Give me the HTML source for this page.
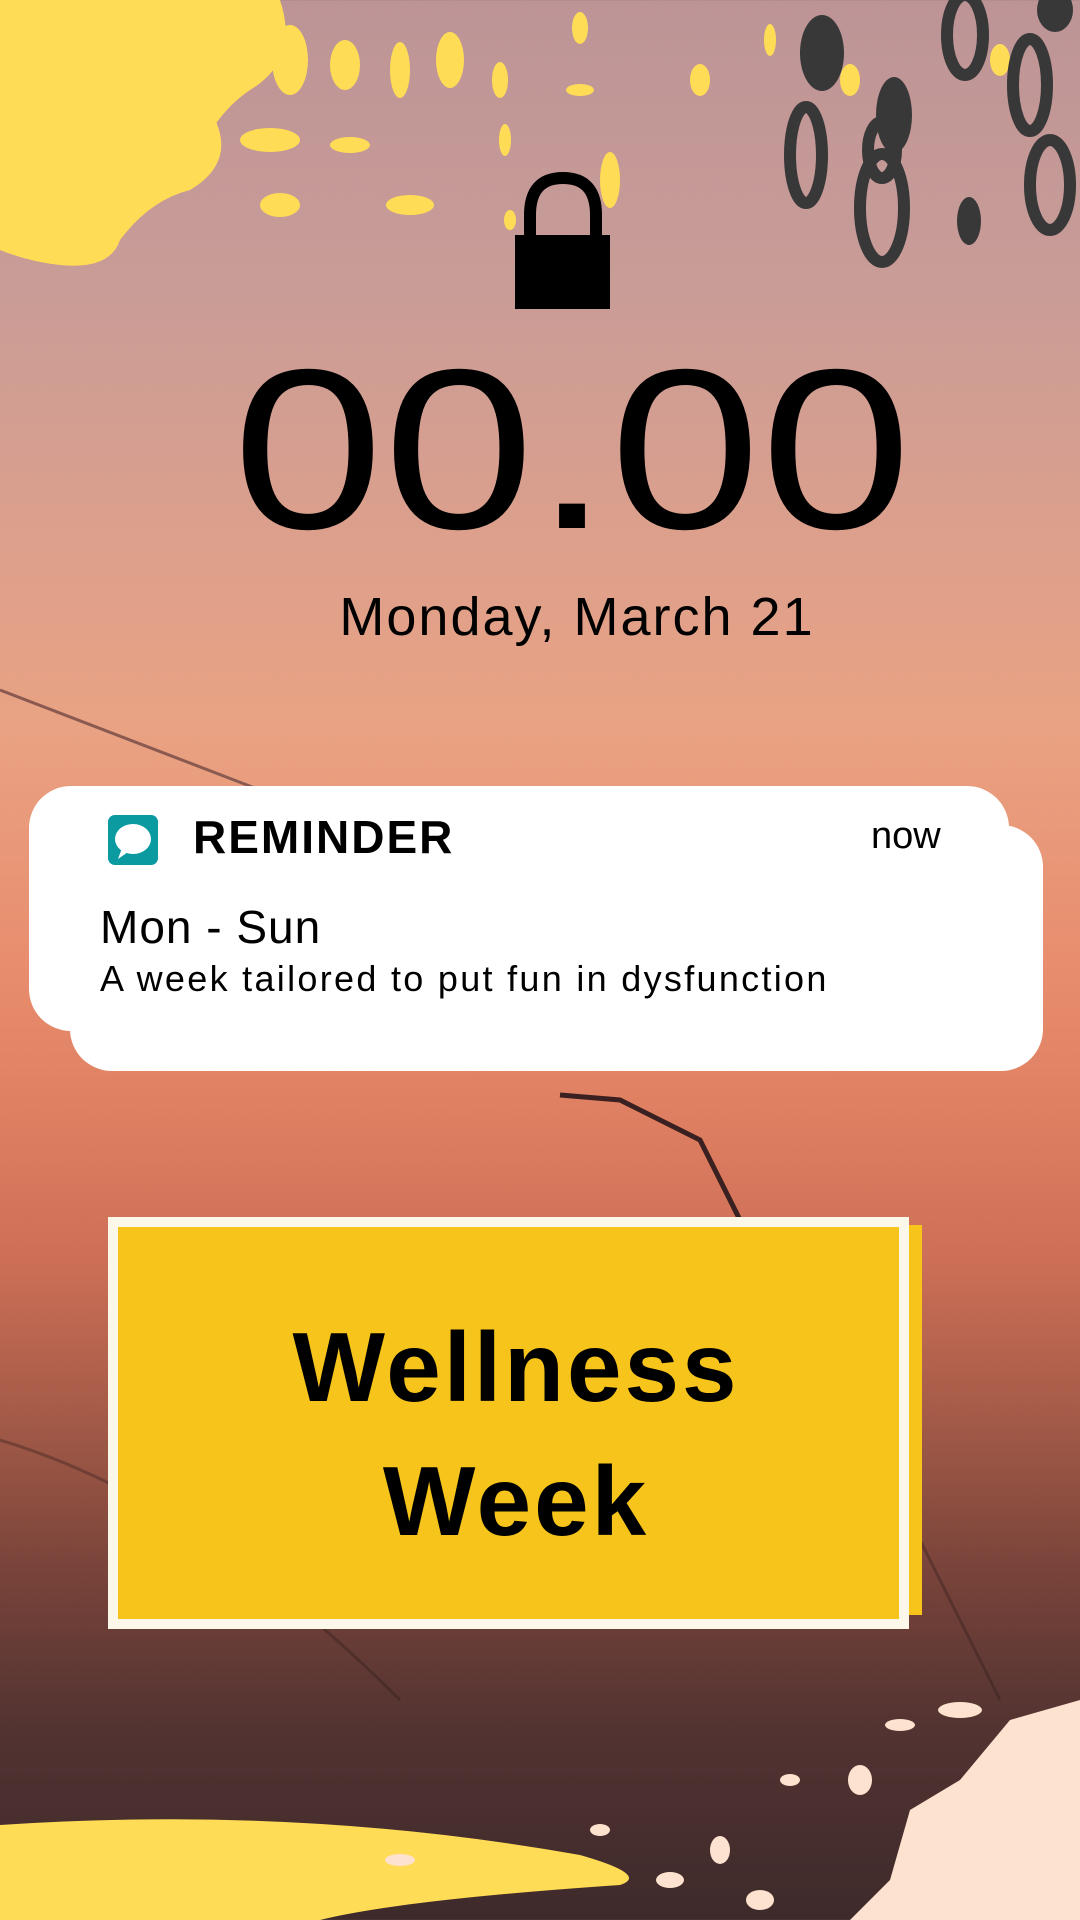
<!DOCTYPE html>
<html><head><meta charset="utf-8"><style>
*{margin:0;padding:0;box-sizing:border-box}
body{width:1080px;height:1920px;overflow:hidden;position:relative;font-family:"Liberation Sans",sans-serif;
background:linear-gradient(180deg,#bd9496 0%,#c99c97 15%,#dfa08a 30%,#e9a283 38%,#e88e6e 50%,#df7f61 58%,#cc6e56 66%,#a35a47 74%,#78433a 82%,#523331 90%,#3e2a2b 100%);}
.abs{position:absolute}
</style></head><body>
<svg class="abs" style="left:0;top:0" width="1080" height="1920" viewBox="0 0 1080 1920">
 <path d="M0 690 L260 790" stroke="#8a5a50" stroke-width="3" fill="none"/>
 <path d="M560 1095 L620 1100 L700 1140 L740 1220" stroke="#3a2020" stroke-width="5" fill="none"/>
 <g stroke="#2a1a1a" stroke-width="3" fill="none" opacity=".35"><path d="M0 1440 Q200 1500 400 1700"/><path d="M900 1500 L1000 1700"/></g>
 <path d="M0 0 L150 0 Q190 40 210 110 Q240 160 190 190 Q150 200 120 240 Q110 270 60 265 Q30 262 0 250Z" fill="#ffdc55"/>
 <path d="M0 0 H280 Q300 60 250 90 Q220 110 200 150 L150 150 Q110 120 90 60Z" fill="#ffdc55"/>
 <g fill="#ffdc55">
  <ellipse cx="290" cy="60" rx="18" ry="35"/><ellipse cx="345" cy="65" rx="15" ry="25"/><ellipse cx="400" cy="70" rx="10" ry="28"/>
  <ellipse cx="450" cy="60" rx="14" ry="28"/><ellipse cx="500" cy="80" rx="8" ry="18"/><ellipse cx="580" cy="28" rx="8" ry="16"/>
  <ellipse cx="270" cy="140" rx="30" ry="12"/><ellipse cx="350" cy="145" rx="20" ry="8"/><ellipse cx="580" cy="90" rx="14" ry="6"/>
  <ellipse cx="610" cy="180" rx="10" ry="28"/><ellipse cx="505" cy="140" rx="6" ry="16"/><ellipse cx="700" cy="80" rx="10" ry="16"/>
  <ellipse cx="770" cy="40" rx="6" ry="16"/><ellipse cx="850" cy="80" rx="10" ry="16"/><ellipse cx="1000" cy="60" rx="10" ry="16"/>
  <ellipse cx="410" cy="205" rx="24" ry="10"/><ellipse cx="280" cy="205" rx="20" ry="12"/><ellipse cx="510" cy="220" rx="6" ry="10"/>
 </g>
 <g fill="none" stroke="#383838" stroke-width="12">
  <ellipse cx="965" cy="35" rx="18" ry="40"/><ellipse cx="1030" cy="85" rx="17" ry="46"/>
  <ellipse cx="806" cy="155" rx="16" ry="48"/><ellipse cx="882" cy="150" rx="14" ry="28"/>
  <ellipse cx="882" cy="208" rx="22" ry="54"/><ellipse cx="1050" cy="185" rx="20" ry="45"/>
 </g>
 <g fill="#383838"><ellipse cx="822" cy="53" rx="22" ry="38"/><ellipse cx="894" cy="115" rx="18" ry="38"/><ellipse cx="969" cy="221" rx="12" ry="24"/><ellipse cx="1055" cy="10" rx="18" ry="22"/></g>
 <path d="M530 236 V215 Q530 178 563 178 Q596 178 596 215 V236" stroke="#000" stroke-width="12" fill="none"/>
 <rect x="515" y="235" width="95" height="74" fill="#000"/>
 <path d="M0 1825 Q300 1805 580 1855 Q650 1875 620 1885 Q400 1900 320 1920 H0Z" fill="#ffdc55"/>
 <g fill="#fde2cf">
  <path d="M1080 1700 L1010 1720 L960 1780 L910 1810 L890 1880 L850 1920 H1080Z"/>
  <ellipse cx="960" cy="1710" rx="22" ry="8"/><ellipse cx="900" cy="1725" rx="15" ry="6"/><ellipse cx="860" cy="1780" rx="12" ry="15"/>
  <ellipse cx="790" cy="1780" rx="10" ry="6"/><ellipse cx="720" cy="1850" rx="10" ry="14"/><ellipse cx="670" cy="1880" rx="14" ry="8"/>
  <ellipse cx="600" cy="1830" rx="10" ry="6"/><ellipse cx="400" cy="1860" rx="15" ry="6"/><ellipse cx="760" cy="1900" rx="14" ry="10"/>
 </g>
</svg>
<div class="abs" style="left:32px;width:1080px;top:345px;text-align:center;font-size:228px;line-height:210px;color:#000;transform:scaleX(1.19);transform-origin:540px 0">00.00</div>
<div class="abs" style="left:0;width:1154px;top:586px;text-align:center;font-size:54px;letter-spacing:2px;color:#000">Monday, March 21</div>
<div class="abs" style="left:29px;top:786px;width:980px;height:245px;background:#fff;border-radius:42px"></div>
<div class="abs" style="left:70px;top:825px;width:973px;height:246px;background:#fff;border-radius:42px"></div>
<svg class="abs" style="left:108px;top:815px" width="50" height="50" viewBox="0 0 50 50"><rect width="50" height="50" rx="7" fill="#0a9aa0"/><ellipse cx="25" cy="24" rx="18" ry="15" fill="#fff"/><path d="M10 44 L14 33 L20 37Z" fill="#fff"/></svg>
<div class="abs" style="left:193px;top:810px;font-size:46px;font-weight:bold;letter-spacing:2px">REMINDER</div>
<div class="abs" style="left:871px;top:815px;font-size:38px">now</div>
<div class="abs" style="left:100px;top:900px;font-size:46px;letter-spacing:1px">Mon - Sun</div>
<div class="abs" style="left:100px;top:958px;font-size:36px;letter-spacing:2.3px">A week tailored to put fun in dysfunction</div>
<div class="abs" style="left:122px;top:1225px;width:800px;height:390px;background:#f6c41a"></div>
<div class="abs" style="left:108px;top:1217px;width:801px;height:412px;border:10px solid #fbf8ea;background:#f6c41a"></div>
<div class="abs" style="left:116px;top:1300px;width:800px;text-align:center;font-size:98px;font-weight:bold;line-height:134px;letter-spacing:3px">Wellness<br>Week</div>
</body></html>
